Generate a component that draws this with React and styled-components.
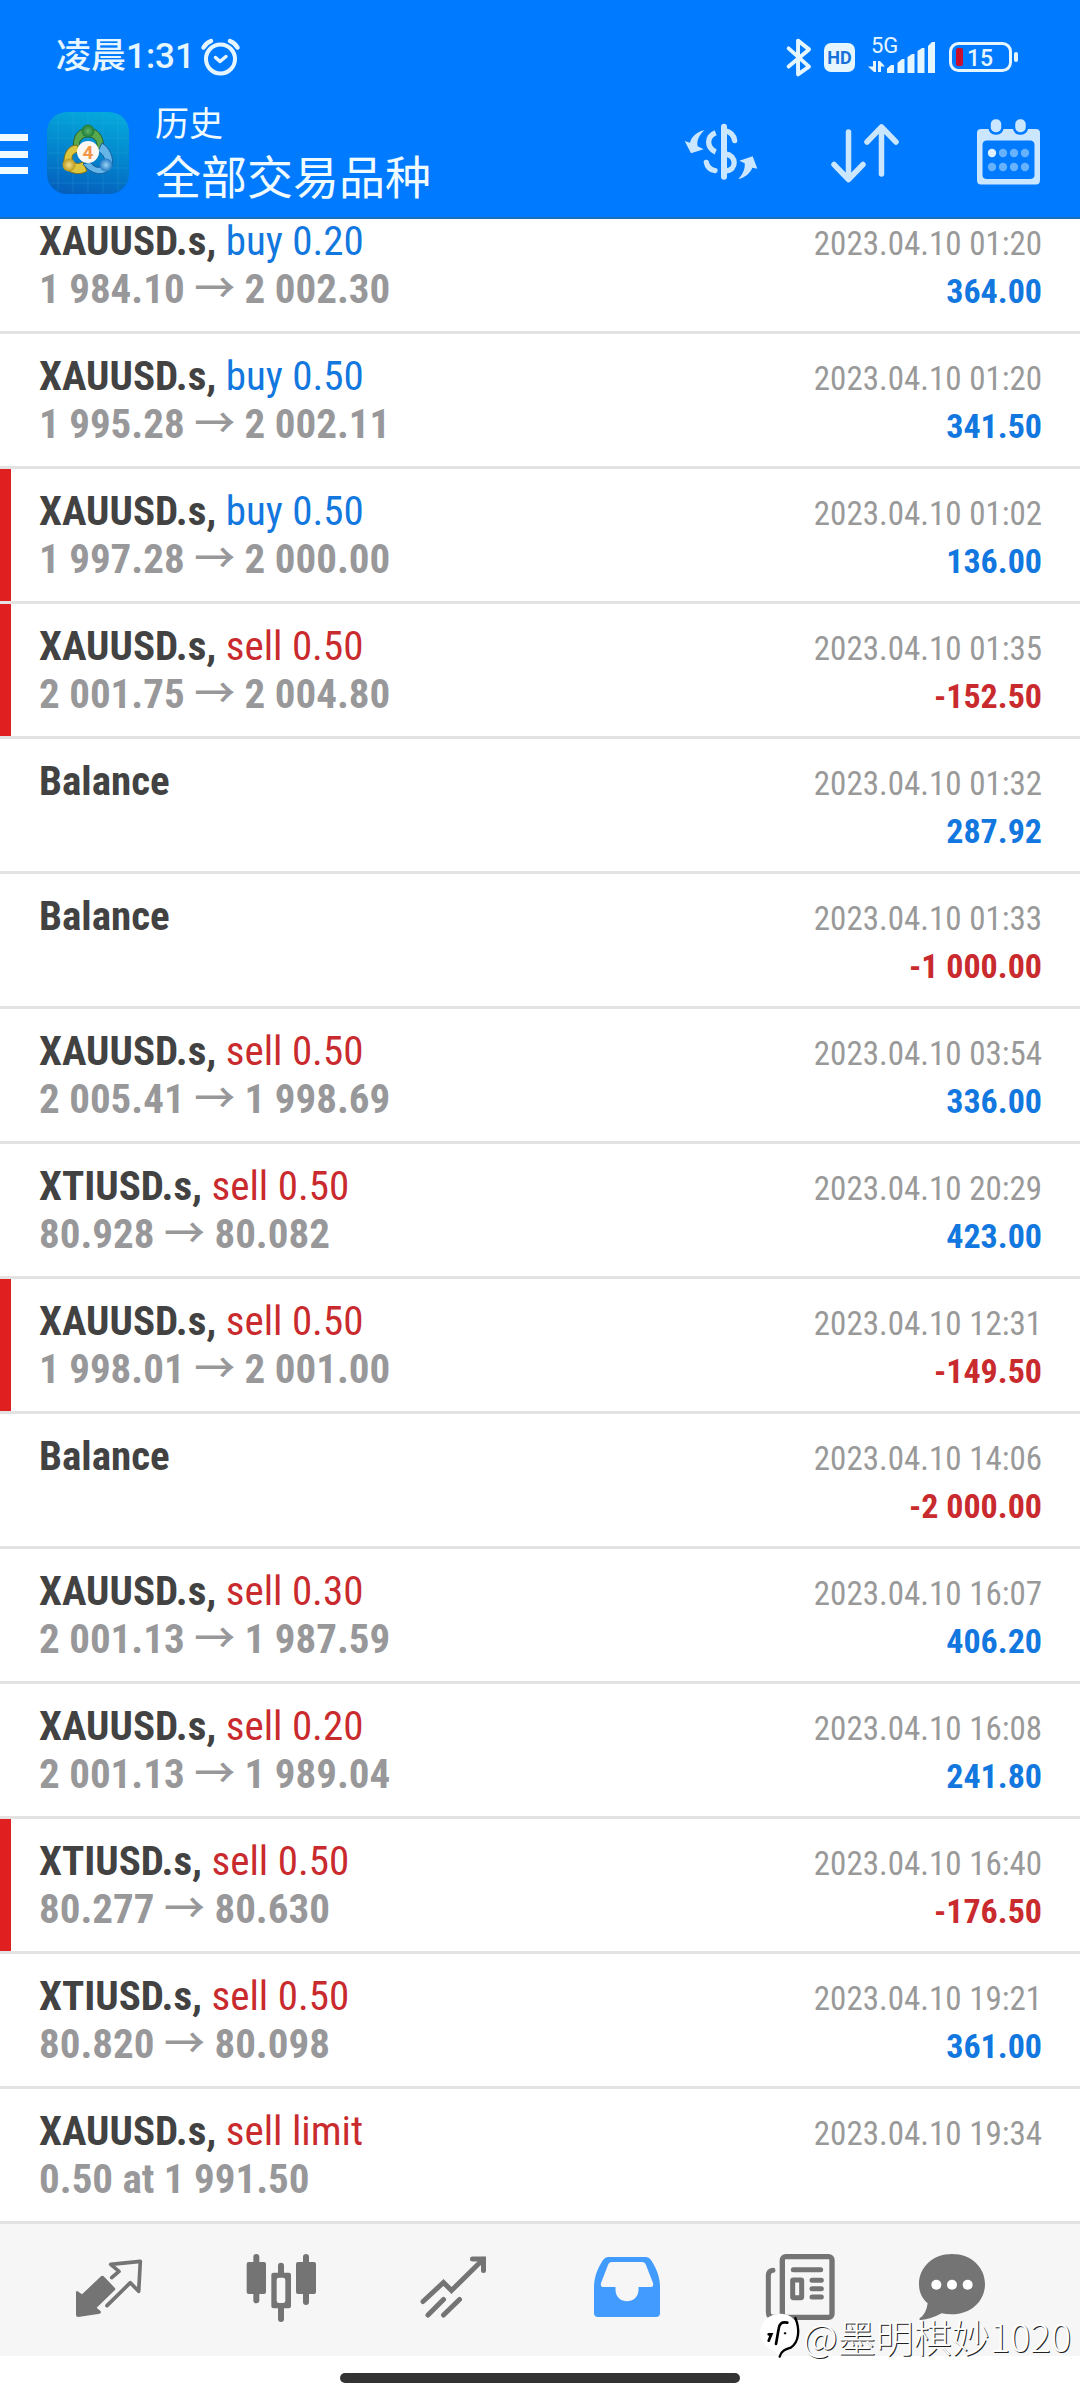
import React from "react";
import styled, { createGlobalStyle } from "styled-components";

const blue = "#007aff";
const profitBlue = "#1277de";
const lossRed = "#c92a2d";

const GlobalStyle = createGlobalStyle`
  *, *::before, *::after { box-sizing: border-box; }
  body {
    margin: 0;
    background: #fff;
    font-family: "Roboto Condensed", Roboto, "Noto Sans CJK SC", sans-serif;
  }
  svg { display: block; flex: none; overflow: visible; }
`;

const Page = styled.div`
  position: relative;
  display: flex;
  flex-direction: column;
  min-height: 100vh;
`;

const Header = styled.header`
  position: relative;
  z-index: 1;
  background: ${blue};
  border-bottom: 2px solid #1b6fbd;
  color: #f0fbff;
`;

const StatusBar = styled.div`
  display: flex;
  align-items: center;
  justify-content: space-between;
  height: 76px;
  padding: 38px 62px 0 56px;
  color: #e6f6ff;
`;

const StatusGroup = styled.div`
  display: flex;
  align-items: center;
  gap: ${(p) => p.$gap}px;
`;

const Clock = styled.span`
  font: 500 35px/38px Roboto, "Noto Sans CJK SC", sans-serif;
`;

const HdBadge = styled.span`
  width: 31px;
  border-radius: 7px;
  background: #e6f6ff;
  color: #1670d8;
  font: 700 18px/29px Roboto, sans-serif;
  text-align: center;
`;

const Toolbar = styled.div`
  display: flex;
  align-items: center;
  height: 141px;
  padding: 12px 35px 0 0;
`;

const IconButton = styled.button`
  display: flex;
  align-items: center;
  justify-content: center;
  width: 72px;
  height: 72px;
  padding: 0;
  border: 0;
  background: none;
  color: #cbe6ff;
`;

const MenuButton = styled(IconButton)`
  justify-content: flex-start;
  width: 28px;
  margin-right: 19px;
  color: #f0fbff;
`;

const Titles = styled.div`
  display: flex;
  flex: 1;
  flex-direction: column;
  margin-left: 26px;
  font-family: "Noto Sans CJK SC", sans-serif;
`;

const Title = styled.h1`
  margin: 0;
  font-size: 34px;
  font-weight: 400;
  line-height: 42px;
`;

const Subtitle = styled.p`
  margin: 0;
  font-size: 46px;
  line-height: 62px;
`;

const Actions = styled.div`
  display: flex;
  gap: 72px;
`;

const List = styled.ul`
  flex: 1;
  margin: -20px 0 0;
  padding: 0;
  list-style: none;
`;

const Row = styled.li`
  min-height: 135px;
  padding: 18px 38px 18px 39px;
  border-bottom: 3px solid #e3e3e3;
  box-shadow: ${(p) => (p.$marked ? "inset 11px 0 #e02020" : "none")};
`;

const Line = styled.div`
  display: flex;
  align-items: baseline;
  height: 48px;
  font-size: 41px;
  line-height: 48px;
  white-space: nowrap;

  &::before { content: "\\200b"; }
`;

const Symbol = styled.strong`
  color: #424242;
  font-weight: 700;
`;

const Operation = styled.span`
  color: ${(p) => (p.$buy ? profitBlue : lossRed)};
`;

const Prices = styled.span`
  color: #98989a;
  font-weight: 700;
`;

const Arrow = styled.span`
  font-family: "Noto Sans CJK SC", sans-serif;
  font-weight: 500;
  line-height: 0;
`;

const Time = styled.time`
  margin-left: auto;
  color: #999;
  font-size: 33px;
`;

const Profit = styled.span`
  margin-left: auto;
  color: ${(p) => (p.$loss ? lossRed : profitBlue)};
  font-size: 34px;
  font-weight: 700;
`;

const TabBar = styled.nav`
  display: flex;
  height: 132px;
  padding: 0 62px 0 21px;
  background: #f6f6f6;
`;

const Tab = styled.button`
  display: flex;
  flex: ${(p) => (p.$last ? 131 : 173)} 1 0;
  align-items: center;
  justify-content: center;
  padding: 0;
  border: 0;
  background: none;
  color: ${(p) => (p.$active ? "#429bff" : "#747474")};
`;

const GestureArea = styled.footer`
  display: flex;
  justify-content: center;
  height: 44px;
  padding-top: 17px;
`;

const GestureBar = styled.div`
  width: 37%;
  height: 10px;
  border-radius: 5px;
  background: #333;
`;

const Watermark = styled.div`
  position: absolute;
  right: 9px;
  bottom: 41px;
  display: flex;
  align-items: center;
  gap: 3px;
  color: #fff;
  font: 300 38px/46px "Noto Sans CJK SC", sans-serif;
  text-shadow: 1px 1px 0 #222;
`;

const AlarmIcon = () => (
  <svg width="39" height="38" viewBox="0 0 39 38" fill="none" stroke="currentColor" strokeLinecap="round" strokeLinejoin="round">
    <circle cx="19.5" cy="21" r="14.5" strokeWidth="4" />
    <path d="M14.500 19.500 19 23.500 25 18.500" strokeWidth="3.500" />
    <path d="M2.500 9.500Q5 5 10 3M36.500 9.500Q34 5 29 3" strokeWidth="4.500" />
  </svg>
);

const BluetoothIcon = () => (
  <svg width="24" height="39" viewBox="24 22 74 116" fill="none" stroke="currentColor" strokeWidth="12" strokeLinecap="round" strokeLinejoin="round">
    <path d="M29 52 92 108 58 132V28L92 55 29 108" />
  </svg>
);

const SignalIcon = () => (
  <svg width="68" height="40" viewBox="0 0 68 40" fill="currentColor">
    <text x="3" y="16" fontFamily="Roboto, sans-serif" fontSize="22">5G</text>
    <path d="M5 24H8V35H6L0 29.500H5ZM10 35V24H12L17 29.500H13V35Z" />
    <path d="M19 36V31.500L23 28H26V36ZM29.500 36V26L34 22H36.500V36ZM39.500 36V20L44 17H46.500V36ZM49.500 36V14L54 11H56.500V36ZM60 36V9L64 5H67V36Z" />
  </svg>
);

const BatteryIcon = () => (
  <svg width="69" height="32" viewBox="0 0 69 32">
    <rect x="1.500" y="2.500" width="60" height="27" rx="8" fill="none" stroke="currentColor" strokeWidth="3" />
    <rect x="7" y="7" width="7" height="18" rx="2" fill="#c8102e" />
    <rect x="65" y="11" width="4" height="10" rx="2" fill="currentColor" />
    <text x="18" y="25" fill="currentColor" fontFamily="Roboto, sans-serif" fontSize="23" fontWeight="500">15</text>
  </svg>
);

const MenuIcon = () => (
  <svg width="28" height="42" viewBox="0 0 28 42" fill="currentColor">
    <path d="M0 2H28V9H0ZM0 19H28V26H0ZM0 35H28V42H0Z" />
  </svg>
);

const AppLogo = () => (
  <svg width="82" height="82" viewBox="0 0 82 82" role="img" aria-label="MetaTrader 4">
    <defs>
      <linearGradient id="tile" x1="0.600" y1="0" x2="0.400" y2="1">
        <stop offset="0" stopColor="#05a8dc" />
        <stop offset="0.500" stopColor="#0386cd" />
        <stop offset="1" stopColor="#0560bd" />
      </linearGradient>
      <radialGradient id="green"><stop offset="0" stopColor="#5fb56a" /><stop offset="1" stopColor="#1b7a37" /></radialGradient>
      <radialGradient id="gold"><stop offset="0" stopColor="#f3e08a" /><stop offset="1" stopColor="#b8971c" /></radialGradient>
      <radialGradient id="sky"><stop offset="0" stopColor="#9ad4f5" /><stop offset="1" stopColor="#2279c4" /></radialGradient>
    </defs>
    <rect width="82" height="82" rx="20" fill="url(#tile)" />
    <path d="M11 3V79M26 1V81M41 1V81M56 1V81M71 3V79M3 11H79M1 26H81M1 41H81M1 56H81M3 71H79" stroke="#35b5e6" strokeWidth="0.800" opacity="0.300" />
    <path d="M27 38C24 24 32 16 41 16S59 24 56 40L49 39C52 30 48 25 41 25S31 30 33 36Z" fill="#5aa84e" stroke="#20602f" />
    <path d="M30 33C22 33 16 41 17 52L22 59C28 63 36 62 40 59L36 50C30 53 25 51 25 46S29 41 33 39Z" fill="#dcc640" stroke="#7f6b16" />
    <path d="M55 31C63 36 67 46 65 54C60 64 46 65 36 52L43 50C48 57 55 57 57 51S55 42 51 39Z" fill="#66b5e9" stroke="#185f9f" />
    <circle cx="41" cy="19" r="6.500" fill="url(#green)" />
    <circle cx="22" cy="53" r="6.500" fill="url(#gold)" />
    <circle cx="59" cy="53" r="6.500" fill="url(#sky)" />
    <circle cx="41" cy="40" r="11" fill="#fbf8f4" />
    <text x="41" y="47" textAnchor="middle" fontFamily="Roboto, sans-serif" fontSize="19" fontWeight="700" fill="#f09448">4</text>
  </svg>
);

const CurrencyIcon = () => (
  <svg width="72" height="60" viewBox="18 38 216 180" fill="none" stroke="currentColor" strokeWidth="16">
    <path d="M135 49V199" strokeWidth="18" strokeLinecap="round" />
    <path d="M138 61C155 65 165 76 167 91M82 156C84 169 95 180 108 181" strokeLinecap="round" />
    <path d="M110 67C82 78 82 112 110 125M140 131C173 135 175 179 140 182" />
    <path d="M76 60C56 63 38 78 33 97L17 92 36 129 74 117 56 108C52 90 62 73 76 60ZM178 206C198 202 214 188 220 172L235 175 221 138 181 151 197 159C199 175 191 194 178 206Z" fill="currentColor" stroke="none" />
  </svg>
);

const SortIcon = () => (
  <svg width="72" height="64" viewBox="0 0 72 64" fill="none" stroke="currentColor" strokeWidth="5.500" strokeLinecap="round" strokeLinejoin="round">
    <path d="M19.500 11V58.500M5 43.500 19.500 58.500 34 43.500M52.500 53V6M38 21 52.500 6 67 21" />
  </svg>
);

const CalendarIcon = () => (
  <svg width="72" height="68" viewBox="0 0 72 68">
    <path fillRule="evenodd" fill="currentColor" d="M8 10H63Q67 10 67 14V61Q67 65.500 63 65.500H8Q4 65.500 4 61V14Q4 10 8 10ZM14 21.500Q9.500 21.500 9.500 26V56Q9.500 60 14 60H57Q61.500 60 61.500 56V26Q61.500 21.500 57 21.500Z" />
    <g fill="currentColor" stroke={blue} strokeWidth="2.500">
      <rect x="16.500" y="-1" width="13" height="15.500" rx="6" />
      <rect x="41" y="-1" width="13" height="15.500" rx="6" />
    </g>
    {[34, 48].map((y) =>
      [19, 30, 41, 52].map((x) => (
        <circle key={`${x}-${y}`} cx={x} cy={y} r="4.200" fill={x === 19 && y === 34 ? "#dff1ff" : "#66b2ff"} />
      ))
    )}
  </svg>
);

const QuotesIcon = () => (
  <svg width="70" height="70" viewBox="38 45 210 210">
    <path fill="currentColor" d="M122 109Q126 105 130 109L163 143Q167 147 163 151L109 203 121 214Q124 219 118 221L54 231Q47 231 47 225V156Q49 150 54 155L65 163Z" />
    <path fill="none" stroke="currentColor" strokeWidth="11" strokeLinecap="round" strokeLinejoin="round" d="M154 113 176 94 151 73 240 64 235 154 210 128 140 197" />
  </svg>
);

const ChartIcon = () => (
  <svg width="70" height="70" viewBox="558 45 210 210" fill="currentColor">
    <rect x="560" y="66" width="58" height="96" rx="6" />
    <rect x="580" y="42" width="18" height="148" rx="9" />
    <rect x="708" y="66" width="60" height="96" rx="6" />
    <rect x="729" y="42" width="18" height="153" rx="9" />
    <path d="M654 98V77Q654 68 663 68T672 77V98H687Q693 98 693 104V199Q693 205 687 205H672V237Q672 246 663 246T654 237V205H640Q634 205 634 199V104Q634 98 640 98ZM657 113Q650 113 650 120V182Q650 189 657 189H669Q676 189 676 182V120Q676 113 669 113Z" fillRule="evenodd" />
  </svg>
);

const TradeIcon = () => (
  <svg width="70" height="70" viewBox="0 0 70 70" fill="none" stroke="currentColor" strokeWidth="5" strokeLinecap="round">
    <path d="M4 46.500 24.500 27.500 32.500 35.500 64 4.500M9 60 24.500 44.500M24.500 60 40.500 44.500" />
    <path d="M53.500 4H64.500V15.500" />
  </svg>
);

const HistoryIcon = () => (
  <svg width="70" height="70" viewBox="0 0 70 70">
    <path fill="currentColor" fillRule="evenodd" d="M16 2H54Q57 2 59 5C65 14 68 23 68 32V58Q68 62 64 62H6Q2 62 2 58V32C2 23 5 14 11 5Q13 2 16 2ZM20 7Q17 7 16 10L9 28Q8 32 11 32H23.500V35C24 50 46 50 46.500 35V32H59Q62 32 61 28L54 10Q53 7 50 7Z" />
  </svg>
);

const NewsIcon = () => (
  <svg width="70" height="70" viewBox="78 45 210 210" fill="none" stroke="currentColor" strokeLinecap="round">
    <rect x="130" y="50" width="149" height="182" rx="10" strokeWidth="16" />
    <path d="M102 91Q88 92 88 108V217Q88 232 104 232H130" strokeWidth="15" />
    <path d="M163 89H245M219 121H247M219 146H247M219 171H247" strokeWidth="15" />
    <rect x="161" y="120" width="27" height="53" rx="2" strokeWidth="15" />
  </svg>
);

const ChatIcon = () => (
  <svg width="70" height="70" viewBox="534 45 210 210">
    <path fill="currentColor" d="M639 42C697 42 738 82 738 132S697 223 639 223Q622 223 608 220Q575 238 545 240Q540 240 542 235Q562 222 566 190C548 174 540 155 540 132C540 82 581 42 639 42Z" />
    <g fill="#fff"><circle cx="592" cy="134" r="15" /><circle cx="639" cy="134" r="15" /><circle cx="686" cy="134" r="15" /></g>
  </svg>
);

const WatermarkLogo = () => (
  <svg width="40" height="44" viewBox="40 240 120 132" fill="none" stroke="#000" strokeLinecap="round">
    <path d="M95 240C132 236 156 262 156 298C156 330 136 345 118 350L100 368 82 350C58 342 41 322 41 294C41 264 64 243 95 240Z" fill="#fff" stroke="none" />
    <path d="M122 266C104 262 98 270 96 284L88 330M66 301H74L66 320" strokeWidth="8" />
    <path d="M146 252C160 285 158 325 132 341C116 346 104 350 99 368" strokeWidth="7" />
    <circle cx="115" cy="298" r="3" fill="#000" />
  </svg>
);

const deals = [
  { symbol: "XAUUSD.s", op: "buy 0.20", from: "1 984.10", to: "2 002.30", time: "2023.04.10 01:20", profit: "364.00" },
  { symbol: "XAUUSD.s", op: "buy 0.50", from: "1 995.28", to: "2 002.11", time: "2023.04.10 01:20", profit: "341.50" },
  { symbol: "XAUUSD.s", op: "buy 0.50", from: "1 997.28", to: "2 000.00", time: "2023.04.10 01:02", profit: "136.00", marked: true },
  { symbol: "XAUUSD.s", op: "sell 0.50", from: "2 001.75", to: "2 004.80", time: "2023.04.10 01:35", profit: "-152.50", marked: true },
  { symbol: "Balance", time: "2023.04.10 01:32", profit: "287.92" },
  { symbol: "Balance", time: "2023.04.10 01:33", profit: "-1 000.00" },
  { symbol: "XAUUSD.s", op: "sell 0.50", from: "2 005.41", to: "1 998.69", time: "2023.04.10 03:54", profit: "336.00" },
  { symbol: "XTIUSD.s", op: "sell 0.50", from: "80.928", to: "80.082", time: "2023.04.10 20:29", profit: "423.00" },
  { symbol: "XAUUSD.s", op: "sell 0.50", from: "1 998.01", to: "2 001.00", time: "2023.04.10 12:31", profit: "-149.50", marked: true },
  { symbol: "Balance", time: "2023.04.10 14:06", profit: "-2 000.00" },
  { symbol: "XAUUSD.s", op: "sell 0.30", from: "2 001.13", to: "1 987.59", time: "2023.04.10 16:07", profit: "406.20" },
  { symbol: "XAUUSD.s", op: "sell 0.20", from: "2 001.13", to: "1 989.04", time: "2023.04.10 16:08", profit: "241.80" },
  { symbol: "XTIUSD.s", op: "sell 0.50", from: "80.277", to: "80.630", time: "2023.04.10 16:40", profit: "-176.50", marked: true },
  { symbol: "XTIUSD.s", op: "sell 0.50", from: "80.820", to: "80.098", time: "2023.04.10 19:21", profit: "361.00" },
  { symbol: "XAUUSD.s", op: "sell limit", note: "0.50 at 1 991.50", time: "2023.04.10 19:34" },
];

const tabs = [
  { label: "行情", Icon: QuotesIcon },
  { label: "图表", Icon: ChartIcon },
  { label: "交易", Icon: TradeIcon },
  { label: "历史", Icon: HistoryIcon, active: true },
  { label: "新闻", Icon: NewsIcon },
  { label: "消息", Icon: ChatIcon },
];

function DealRow({ symbol, op, from, to, note, time, profit, marked }) {
  return (
    <Row $marked={marked}>
      <Line>
        <span>
          <Symbol>{op ? `${symbol},` : symbol}</Symbol>
          {op && <> <Operation $buy={op.startsWith("buy")}>{op}</Operation></>}
        </span>
        <Time>{time}</Time>
      </Line>
      <Line>
        {from && <Prices>{from} <Arrow>→</Arrow> {to}</Prices>}
        {note && <Prices>{note}</Prices>}
        {profit && <Profit $loss={profit.startsWith("-")}>{profit}</Profit>}
      </Line>
    </Row>
  );
}

export default function App() {
  return (
    <Page>
      <GlobalStyle />
      <Header>
        <StatusBar>
          <StatusGroup $gap={6}>
            <Clock>凌晨1:31</Clock>
            <AlarmIcon />
          </StatusGroup>
          <StatusGroup $gap={13}>
            <BluetoothIcon />
            <HdBadge>HD</HdBadge>
            <SignalIcon />
            <BatteryIcon />
          </StatusGroup>
        </StatusBar>
        <Toolbar>
          <MenuButton aria-label="菜单"><MenuIcon /></MenuButton>
          <AppLogo />
          <Titles>
            <Title>历史</Title>
            <Subtitle>全部交易品种</Subtitle>
          </Titles>
          <Actions>
            <IconButton aria-label="交易品种"><CurrencyIcon /></IconButton>
            <IconButton aria-label="排序"><SortIcon /></IconButton>
            <IconButton aria-label="日期"><CalendarIcon /></IconButton>
          </Actions>
        </Toolbar>
      </Header>
      <List>
        {deals.map((deal, i) => <DealRow key={i} {...deal} />)}
      </List>
      <TabBar>
        {tabs.map(({ label, Icon, active }, i) => (
          <Tab key={label} aria-label={label} $active={active} $last={i === tabs.length - 1}>
            <Icon />
          </Tab>
        ))}
      </TabBar>
      <GestureArea><GestureBar /></GestureArea>
      <Watermark><WatermarkLogo />@墨明棋妙1020</Watermark>
    </Page>
  );
}
